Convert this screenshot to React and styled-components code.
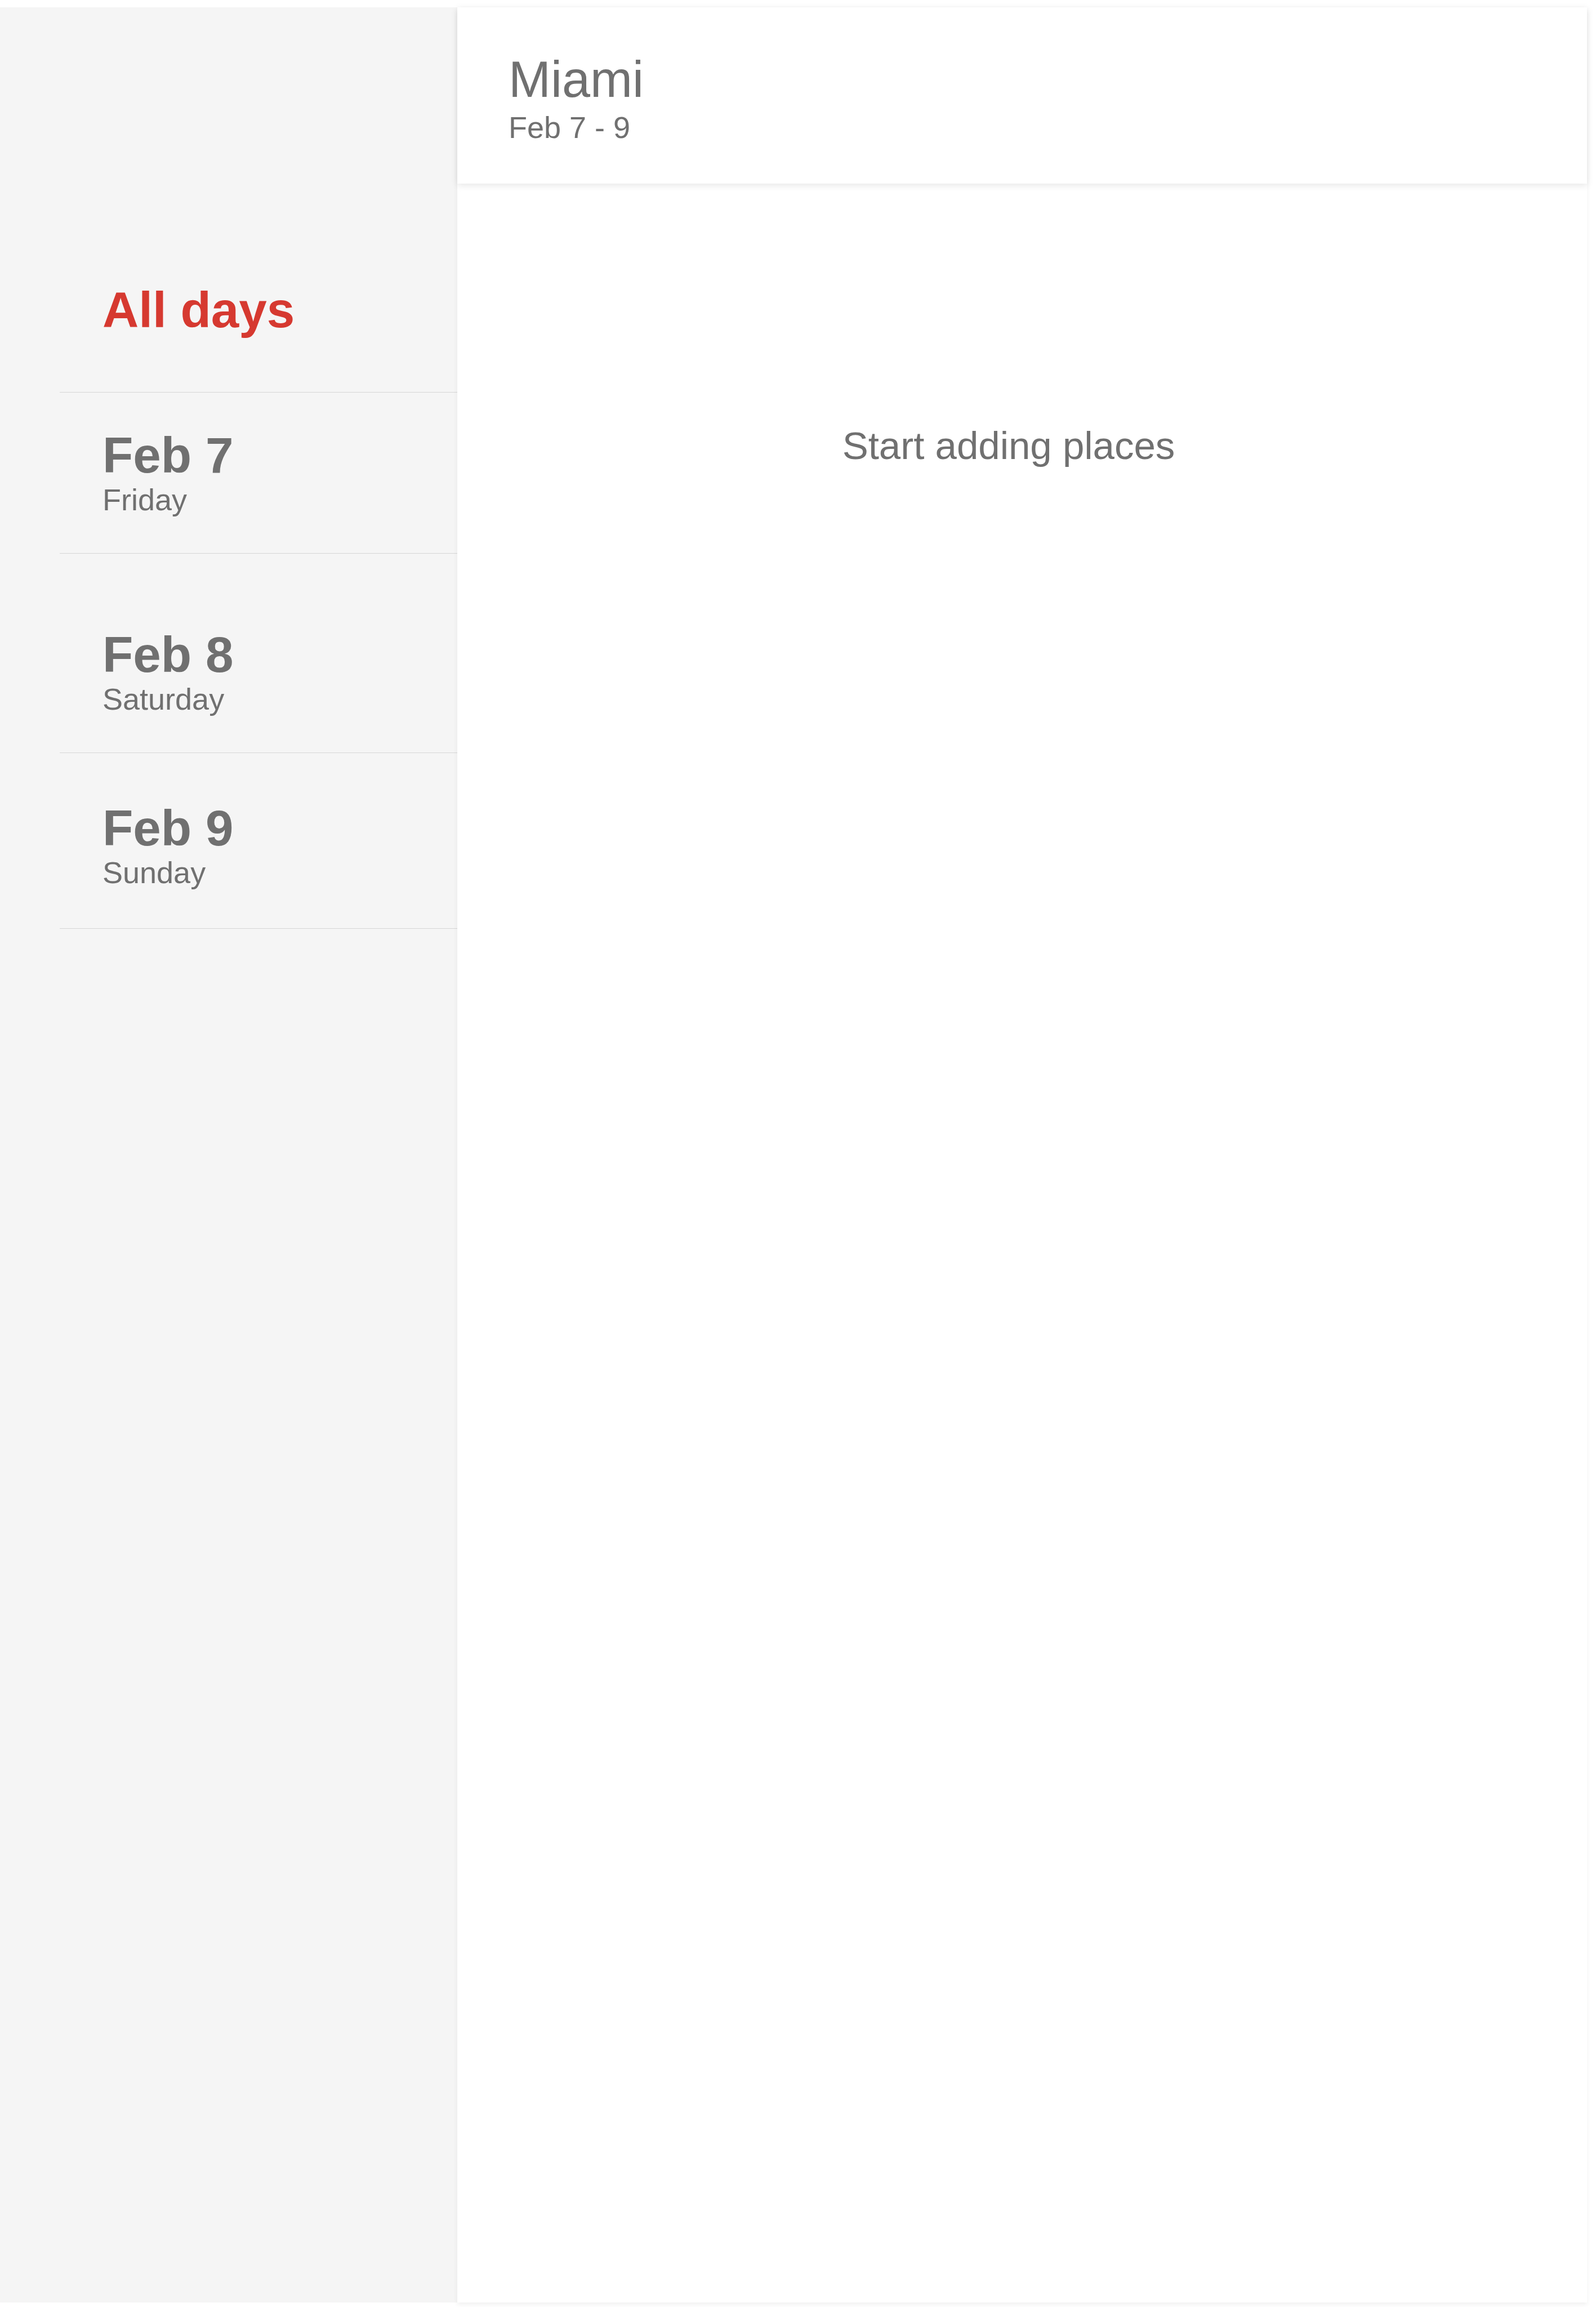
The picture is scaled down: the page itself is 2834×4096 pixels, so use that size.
import React, { useState } from "react";
import styled, { createGlobalStyle } from "styled-components";

const GlobalStyle = createGlobalStyle`
  *, *::before, *::after { box-sizing: border-box; }
  body {
    margin: 0;
    background: #ffffff;
    color: #707070;
    font-family: "Liberation Sans", Arial, Helvetica, sans-serif;
  }
  h1, p, ul { margin: 0; padding: 0; }
`;

const Page = styled.div`
  display: flex;
  min-height: 100vh;
  padding: 13px 16px 8px 0;
`;

const Sidebar = styled.nav`
  flex: 0 0 812px;
  padding-left: 106px;
  background: #f5f5f5;
`;

const DayList = styled.ul`
  list-style: none;
`;

const DayItem = styled.li`
  border-bottom: 1px solid #d6d6d6;
`;

const DayButton = styled.button`
  display: block;
  width: 100%;
  padding: ${({ $above }) => $above}px 24px ${({ $below }) => $below}px 76px;
  border: 0;
  background: transparent;
  color: ${({ $active }) => ($active ? "#d63930" : "inherit")};
  font-family: inherit;
  text-align: left;
  cursor: pointer;
`;

const DayTitle = styled.span`
  display: block;
  font-size: 89px;
  font-weight: 700;
  line-height: 90px;
`;

const Weekday = styled.span`
  display: block;
  margin-top: 4px;
  font-size: 54px;
  line-height: 60px;
`;

const Panel = styled.main`
  flex: 1;
  min-width: 0;
  background: #ffffff;
  box-shadow: 0 4px 8px rgba(0, 0, 0, 0.06);
`;

const PanelHeader = styled.header`
  padding: 83px 91px 70px;
  background: #ffffff;
  box-shadow: 0 3px 12px rgba(0, 0, 0, 0.1);
`;

const City = styled.h1`
  font-size: 90px;
  font-weight: 400;
  line-height: 90px;
`;

const DateRange = styled.p`
  margin-top: 10px;
  font-size: 54px;
  line-height: 60px;
`;

const EmptyState = styled.p`
  padding: 426px 48px 0 0;
  font-size: 69px;
  line-height: 80px;
  text-align: center;
`;

const days = [
  { title: "All days", above: 492, below: 101 },
  { title: "Feb 7", weekday: "Friday", above: 66, below: 65 },
  { title: "Feb 8", weekday: "Saturday", above: 134, below: 65 },
  { title: "Feb 9", weekday: "Sunday", above: 88, below: 69 },
];

export default function App() {
  const [selected, setSelected] = useState("All days");

  return (
    <>
      <GlobalStyle />
      <Page>
        <Sidebar aria-label="Trip days">
          <DayList>
            {days.map(({ title, weekday, above, below }) => (
              <DayItem key={title}>
                <DayButton
                  type="button"
                  $above={above}
                  $below={below}
                  $active={selected === title}
                  aria-pressed={selected === title}
                  onClick={() => setSelected(title)}
                >
                  <DayTitle>{title}</DayTitle>
                  {weekday && <Weekday>{weekday}</Weekday>}
                </DayButton>
              </DayItem>
            ))}
          </DayList>
        </Sidebar>
        <Panel>
          <PanelHeader>
            <City>Miami</City>
            <DateRange>Feb 7 - 9</DateRange>
          </PanelHeader>
          <EmptyState>Start adding places</EmptyState>
        </Panel>
      </Page>
    </>
  );
}
